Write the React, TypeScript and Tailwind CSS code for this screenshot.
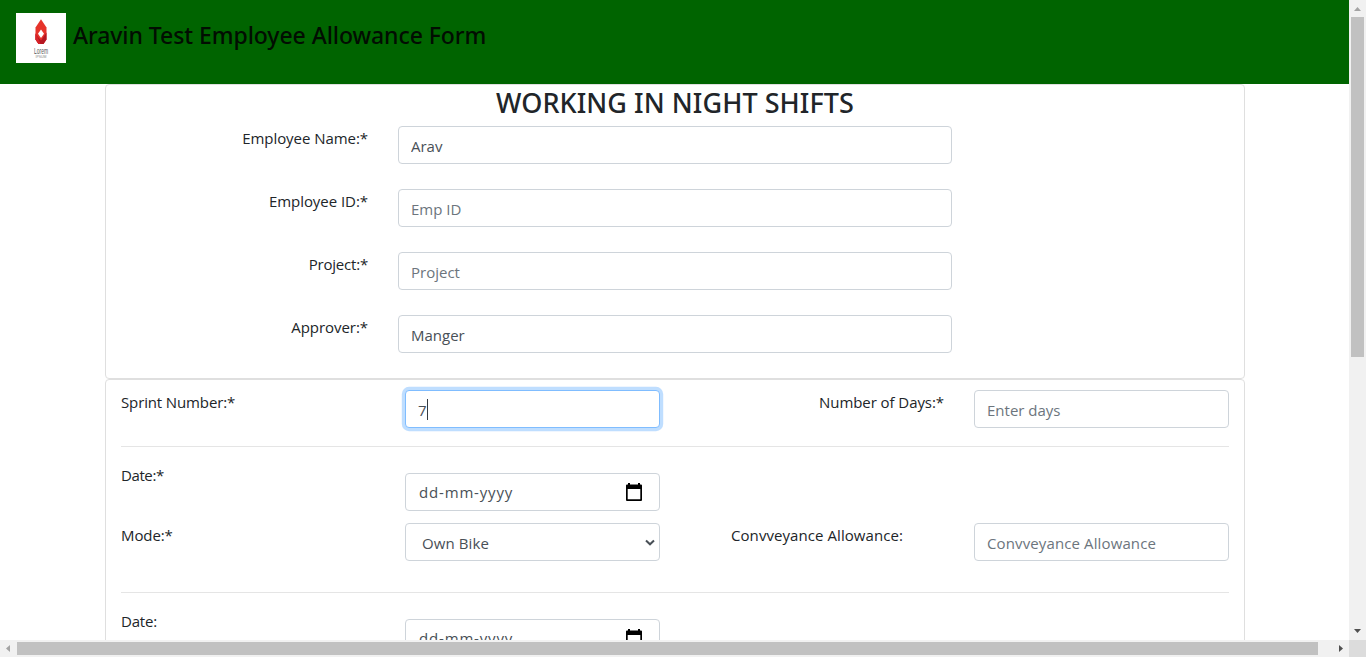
import React from 'react';

function Label({ children, className = '' }: { children: React.ReactNode; className?: string }) {
  return <label className={`block h-6 whitespace-nowrap leading-6 text-[#212529] ${className}`}>{children}</label>;
}

const box = 'h-[38px] rounded border border-[#ced4da] bg-white text-[#495057]';

function TextInput({ value, placeholder, className = '' }: { value?: string; placeholder?: string; className?: string }) {
  return (
    <input
      type="text"
      defaultValue={value}
      placeholder={placeholder}
      className={`${box} block px-3 pt-px outline-none placeholder:text-[#6c757d] ${className}`}
    />
  );
}

function DateInput() {
  return (
    <div className={`${box} flex w-[255px] items-center justify-between pb-px pl-[13px] pr-[17px] pt-[2px]`}>
      <span className="tracking-[0.83px]">dd-mm-yyyy</span>
      <svg width="16" height="18" viewBox="0 0 16 18" className="-mt-[2px] shrink-0">
        <path d="M2 0h2v1.500h8V0h2v1.500h1a1 1 0 0 1 1 1V17a1 1 0 0 1-1 1H1a1 1 0 0 1-1-1V2.500a1 1 0 0 1 1-1h1zM1.700 6v10.300h12.600V6z" fill="#000" fillRule="evenodd" />
      </svg>
    </div>
  );
}

function SelectBox({ value }: { value: string }) {
  return (
    <div className={`${box} flex w-[255px] items-center justify-between pl-4 pr-1 pt-[3px]`}>
      <span className="tracking-[0.1px]">{value}</span>
      <svg width="10" height="7" viewBox="0 0 10 7" className="-mt-[3px]">
        <path d="M1 1.500 5 5.300 9 1.500" fill="none" stroke="#495057" strokeWidth="2" />
      </svg>
    </div>
  );
}

const employeeFields = [
  { label: 'Employee Name:*', value: 'Arav' },
  { label: 'Employee ID:*', placeholder: 'Emp ID' },
  { label: 'Project:*', placeholder: 'Project', tight: true },
  { label: 'Approver:*', value: 'Manger' },
];

function Logo() {
  return (
    <svg width="50" height="50" viewBox="0 0 50 50" className="shrink-0 bg-white">
      <path d="M25 6.300 30.500 14.500v12L27.500 31h-5L19.500 26.500v-12z" fill="#e6332a" />
      <path d="M25 27.500l5.500-8v7L27.500 31h-5L19.500 26.500V21z" fill="#b51722" />
      <path d="M19.500 20v6.500L22.500 31h2L22 25z" fill="#d8232a" />
      <path d="M25 16.500 28 20.800 25 25 22 20.800z" fill="#fff" />
      <text x="25" y="40.500" textAnchor="middle" fontSize="8.500" textLength="14" lengthAdjust="spacingAndGlyphs" fill="#555" fontFamily="Liberation Sans, sans-serif">Lorem</text>
      <text x="25" y="45" textAnchor="middle" fontSize="3.500" textLength="11" fill="#888" fontFamily="Liberation Sans, sans-serif">IPSUM</text>
    </svg>
  );
}

export default function App() {
  return (
    <div className="flex h-[657px] w-[1366px] flex-col overflow-hidden bg-white font-['Open_Sans',sans-serif] text-[15px]">
      <div className="flex h-[640px]">
        <main className="h-[640px] w-[1349px] overflow-hidden">
          <header className="flex h-[84px] items-start bg-[#006400] pl-4 pt-[13px]">
            <Logo />
            <h1 className="ml-[7px] mt-[8px] whitespace-nowrap font-['Noto_Sans',sans-serif] text-[23px] font-medium leading-[29px] tracking-[-0.06px] text-[#020d02]">
              Aravin Test Employee Allowance Form
            </h1>
          </header>

          <section className="ml-[105px] h-[295px] w-[1140px] rounded border border-[#dfdfdf]">
            <h2 className="h-[41px] text-center font-['Noto_Sans',sans-serif] text-[27px] font-medium leading-[36px] tracking-[0.06px] text-[#212529]">
              WORKING IN NIGHT SHIFTS
            </h2>
            <div className="flex flex-col gap-[25px]">
              {employeeFields.map((f) => (
                <div key={f.label} className="flex h-[38px]">
                  <Label className={`w-[262px] text-right ${f.tight ? 'tracking-[-0.2px]' : 'tracking-[-0.05px]'}`}>{f.label}</Label>
                  <TextInput value={f.value} placeholder={f.placeholder} className="ml-[30px] w-[554px]" />
                </div>
              ))}
            </div>
          </section>

          <section className="ml-[105px] h-[400px] w-[1140px] rounded border border-[#dfdfdf] px-[15px] pt-[10px]">
            <div className="flex h-[38px]">
              <Label className="w-[284px] tracking-[-0.13px]">Sprint Number:*</Label>
              <div className="flex h-[38px] w-[255px] items-center rounded border border-[#80bdff] bg-white px-3 pt-[3px] text-[#495057] shadow-[0_0_0_3.2px_rgba(0,123,255,0.25)]">
                <span>7</span>
                <span className="-mt-[3px] h-[21px] w-px bg-[#343a40]" />
              </div>
              <Label className="w-[284px] text-right tracking-[-0.07px]">Number of Days:*</Label>
              <TextInput placeholder="Enter days" className="ml-[30px] w-[255px]" />
            </div>

            <hr className="mt-[18px] border-[#e5e5e5]" />

            <div className="mt-4 flex h-12">
              <Label className="w-[284px] tracking-[-0.4px]">Date:*</Label>
              <div className="pt-[10px]">
                <DateInput />
              </div>
            </div>
            <div className="mt-3 flex h-[38px]">
              <Label className="w-[284px] tracking-[-0.1px]">Mode:*</Label>
              <SelectBox value="Own Bike" />
              <Label className="ml-[71px] w-[243px] tracking-[0.07px]">Convveyance Allowance:</Label>
              <TextInput placeholder="Convveyance Allowance" className="w-[255px] tracking-[0.12px]" />
            </div>

            <hr className="mt-[31px] border-[#e5e5e5]" />

            <div className="mt-4 flex h-12">
              <Label className="w-[284px] tracking-[-0.2px]">Date:</Label>
              <div className="pt-[10px]">
                <DateInput />
              </div>
            </div>
          </section>
        </main>

        <div className="flex w-[17px] flex-col items-center bg-[#f1f1f1]">
          <svg width="17" height="17" viewBox="0 0 17 17" className="shrink-0"><path d="M5 11h7L8.500 7z" fill="#a3a3a3" /></svg>
          <div className="h-[340px] w-[13px] bg-[#c1c1c1]" />
          <svg width="17" height="17" viewBox="0 0 17 17" className="mt-auto shrink-0"><path d="M5 6h7L8.500 10z" fill="#505050" /></svg>
        </div>
      </div>

      <div className="flex h-[17px] items-center bg-[#f1f1f1]">
        <svg width="17" height="17" viewBox="0 0 17 17" className="shrink-0"><path d="M10 5v7L6 8.500z" fill="#a3a3a3" /></svg>
        <div className="h-[13px] w-[1301px] bg-[#c1c1c1]" />
        <svg width="17" height="17" viewBox="0 0 17 17" className="ml-auto shrink-0"><path d="M7 5v7l4-3.500z" fill="#505050" /></svg>
        <div className="h-[17px] w-[17px] bg-[#dcdcdc]" />
      </div>
    </div>
  );
}
